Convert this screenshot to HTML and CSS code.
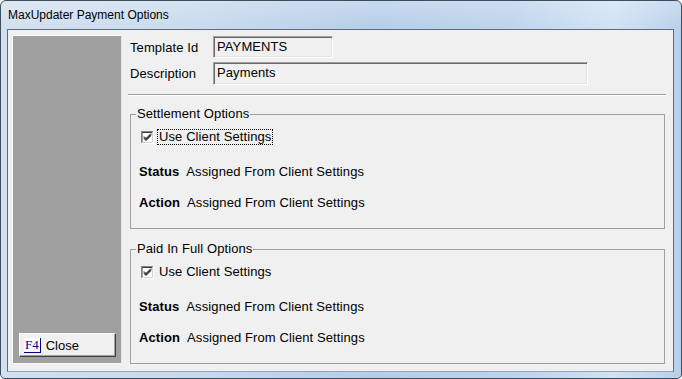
FILE: index.html
```html
<!DOCTYPE html>
<html lang="en">
<head>
  <meta charset="UTF-8">
  <title>MaxUpdater Payment Options</title>
  <link rel="stylesheet" href="styles.css">
</head>
<body>
  <div class="window">
    <div class="titlebar">MaxUpdater Payment Options</div>
    <div class="client">
      <div class="sidebar">
        <button class="btn-close"><span class="key">F4</span>Close</button>
      </div>
      <div class="main">
        <div class="field-row row-id">
          <label class="field-label">Template Id</label>
          <div class="textbox tb-id">PAYMENTS</div>
        </div>
        <div class="field-row row-desc">
          <label class="field-label">Description</label>
          <div class="textbox tb-desc">Payments</div>
        </div>
        <div class="separator"></div>

        <fieldset class="group">
          <legend>Settlement Options</legend>
          <div class="check-row">
            <svg class="checkbox" width="13" height="13" viewBox="0 0 13 13">
              <rect x="0" y="0" width="13" height="13" fill="#fff"/>
              <path d="M0 12.5V0.5H12.5" fill="none" stroke="#808080"/>
              <path d="M1 11.5V1.5H11.5" fill="none" stroke="#404040"/>
              <path d="M0.5 12.5H12.5V0" fill="none" stroke="#fff"/>
              <path d="M1.5 11.5H11.5V1" fill="none" stroke="#d4d0c8"/>
              <path d="M3 5.5l2 2 5-5M3 6.5l2 2 5-5M3 7.5l2 2 5-5" fill="none" stroke="#000"/>
            </svg>
            <span class="check-label focused">Use Client Settings</span>
          </div>
          <div class="info-row status"><b>Status</b> Assigned From Client Settings</div>
          <div class="info-row action"><b>Action</b> Assigned From Client Settings</div>
        </fieldset>

        <fieldset class="group">
          <legend>Paid In Full Options</legend>
          <div class="check-row">
            <svg class="checkbox" width="13" height="13" viewBox="0 0 13 13">
              <rect x="0" y="0" width="13" height="13" fill="#fff"/>
              <path d="M0 12.5V0.5H12.5" fill="none" stroke="#808080"/>
              <path d="M1 11.5V1.5H11.5" fill="none" stroke="#404040"/>
              <path d="M0.5 12.5H12.5V0" fill="none" stroke="#fff"/>
              <path d="M1.5 11.5H11.5V1" fill="none" stroke="#d4d0c8"/>
              <path d="M3 5.5l2 2 5-5M3 6.5l2 2 5-5M3 7.5l2 2 5-5" fill="none" stroke="#000"/>
            </svg>
            <span class="check-label">Use Client Settings</span>
          </div>
          <div class="info-row status"><b>Status</b> Assigned From Client Settings</div>
          <div class="info-row action"><b>Action</b> Assigned From Client Settings</div>
        </fieldset>
      </div>
    </div>
  </div>
</body>
</html>
```

FILE: styles.css
```css
* {
  box-sizing: border-box;
}
body {
  margin: 0;
  font-family: "Liberation Sans", Arial, sans-serif;
  font-size: 13px;
  color: #000;
  background: #fff;
}
.window {
  width: 682px;
  height: 379px;
  border: 1px solid #3f4e5f;
  border-radius: 6px 6px 5px 5px;
  padding: 0 7px 7px 6px;
  display: flex;
  flex-direction: column;
  background:
    linear-gradient(180deg, rgba(255, 255, 255, 0.25), rgba(255, 255, 255, 0) 30px),
    linear-gradient(90deg, #d2e0ef 0%, #c9dbee 25%, #b5cde8 55%, #bcd3ec 75%, #d0e2f4 90%, #b8d0ea 100%);
}
.titlebar {
  height: 28px;
  line-height: 28px;
  padding-left: 1px;
  font-family: "Liberation Sans", Arial, sans-serif;
  font-size: 12px;
  color: #000;
}
.client {
  flex: 1;
  display: flex;
  background: #f0f0f0;
  border: 1px solid #5e6e80;
  border-bottom-color: #8fa4ba;
  padding: 5px 7px 7px 4px;
}
.sidebar {
  width: 110px;
  background: #a0a0a0;
  border: 1px solid #fff;
  border-right-color: #e6e6e6;
  border-bottom-color: #f6f6f6;
  display: flex;
  flex-direction: column;
  justify-content: flex-end;
  padding: 0 5px 6px 6px;
}
.btn-close {
  width: 97px;
  height: 24px;
  background: #f0f0f0;
  border: 1px solid;
  border-color: #fff #404040 #404040 #fff;
  box-shadow: inset -1px -1px #a0a0a0;
  padding: 0 0 0 4px;
  display: flex;
  align-items: center;
  font-family: "Liberation Sans", Arial, sans-serif;
  font-size: 13px;
  color: #000;
  text-align: left;
}
.key {
  font-family: "Liberation Serif", "Times New Roman", serif;
  font-size: 13px;
  line-height: 14px;
  color: #000080;
  background: #fbfbff;
  padding: 0 1px;
  border-right: 1px solid #000080;
  border-bottom: 1px solid #000080;
  margin-right: 5px;
}
.main {
  flex: 1;
  margin-left: 6px;
  display: flex;
  flex-direction: column;
  letter-spacing: 0.1px;
}
.field-row {
  display: flex;
  align-items: center;
  padding-left: 2px;
}
.row-id {
  margin-top: 1px;
  height: 22px;
}
.row-desc {
  margin-top: 4px;
  height: 23px;
}
.field-label {
  width: 83px;
}
.textbox {
  height: 100%;
  background: #f0f0f0;
  border: 1px solid;
  border-color: #a0a0a0 #fff #fff #a0a0a0;
  box-shadow: inset 1px 1px #696969, inset -1px -1px #e3e3e3;
  padding: 2px 0 0 3px;
  line-height: 16px;
}
.tb-id {
  width: 120px;
}
.tb-desc {
  width: 375px;
}
.separator {
  margin-top: 9px;
  height: 2px;
  border-top: 1px solid #a0a0a0;
  border-bottom: 1px solid #fff;
}
.group {
  margin: 11px 1px 0 2px;
  padding: 0 0 17px 0;
  border: 1px solid #a0a0a0;
  min-width: 0;
}
.group + .group {
  margin-top: 13px;
}
.group legend {
  margin-left: 5px;
  padding: 0 1px;
  line-height: 14px;
}
.check-row {
  margin-top: 8px;
  height: 16px;
  display: flex;
  align-items: center;
  padding-left: 10px;
}
.checkbox {
  flex: none;
}
.check-label {
  margin-left: 3px;
  padding: 0 1px;
  line-height: 14px;
  border: 1px dotted transparent;
}
.check-label.focused {
  border-color: #000;
}
.info-row {
  height: 16px;
  line-height: 16px;
  padding-left: 8px;
}
.info-row b {
  margin-right: 4px;
}
.status {
  margin-top: 19px;
}
.action {
  margin-top: 15px;
}
```
